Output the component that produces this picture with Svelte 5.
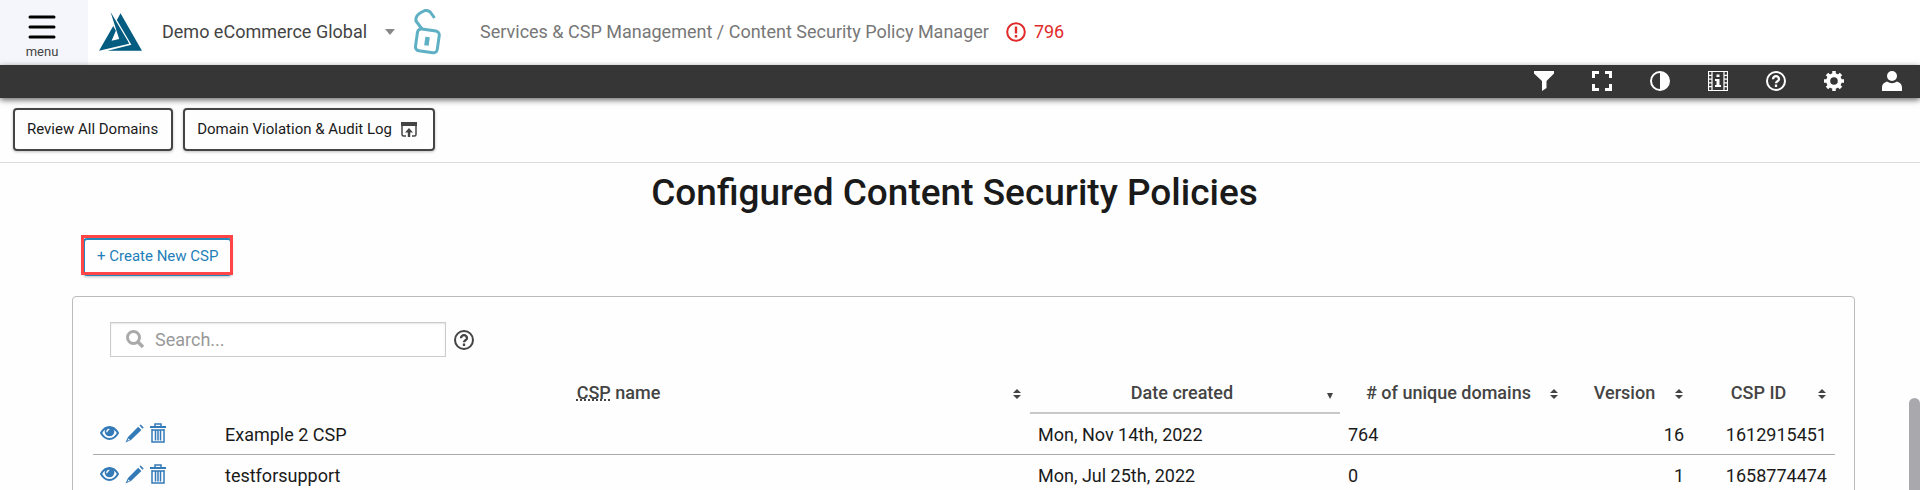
<script>
  let search = $state('');

  const columns = [
    { key: 'created', label: 'Date created', sorted: true },
    { key: 'domains', label: '# of unique domains' },
    { key: 'version', label: 'Version' },
    { key: 'id', label: 'CSP ID' }
  ];

  const policies = [
    { name: 'Example 2 CSP', created: 'Mon, Nov 14th, 2022', domains: 764, version: 16, id: '1612915451' },
    { name: 'testforsupport', created: 'Mon, Jul 25th, 2022', domains: 0, version: 1, id: '1658774474' }
  ];

  let visible = $derived(
    policies.filter((p) => p.name.toLowerCase().includes(search.toLowerCase()))
  );
</script>

{#snippet helpIcon()}
  <svg viewBox="0 0 20 20" width="20" height="20" fill="none" stroke="currentColor" stroke-width="2">
    <circle cx="10" cy="10" r="9" />
    <path d="M7 8.200a3 3 0 0 1 6 0c0 2-3 2.200-3 4M10 13.600v2.400" stroke-width="2.300" />
  </svg>
{/snippet}

{#snippet sorter()}
  <svg class="sorter" viewBox="0 0 8 12" width="8" height="12" fill="currentColor">
    <path d="M4 1l4 4H0zM4 11l4-4H0z" />
  </svg>
{/snippet}

<div class="app">
  <header>
    <button class="menu">
      <svg viewBox="0 0 28 24" width="28" height="24" stroke="#000" stroke-width="3" stroke-linecap="round">
        <path d="M2 2h24M2 12h24M2 22h24" />
      </svg>
      <span>menu</span>
    </button>
    <svg class="logo" viewBox="0 0 130 118" width="43" height="39" fill="#045c80">
      <path d="M35 0L61 82 38 87 51 57 43 42 0 117 91 96 88 89z" />
      <path d="M65 4l65 113H26l72-18L54 24z" />
    </svg>
    <button class="site">
      Demo eCommerce Global
      <svg viewBox="0 0 10 6" width="10" height="6" fill="#888"><path d="M0 0h10L5 6z" /></svg>
    </button>
    <svg class="lock" viewBox="0 0 28 48" width="28" height="48" fill="none" stroke="#5fb0c4" stroke-width="3">
      <path d="M20.500 10L17 5Q15 2 11 2.500L7 4.500Q1 8 2 13L8 21" />
      <rect x="2.500" y="22" width="22" height="22" rx="4" transform="rotate(8 14 32)" />
      <path d="M13.600 29l-1.200 8.500" stroke-width="4.500" />
    </svg>
    <nav>Services &amp; CSP Management / Content Security Policy Manager</nav>
    <a class="alerts" href="#alerts">
      <svg viewBox="0 0 20 20" width="20" height="20" fill="none" stroke="currentColor" stroke-width="2">
        <circle cx="10" cy="10" r="8.800" />
        <path d="M10 4.500v7M10 13v2.500" stroke-width="2.400" />
      </svg>
      796
    </a>
  </header>

  <div class="tools">
    <button aria-label="Filter">
      <svg viewBox="0 0 20 20" width="20" height="20" fill="currentColor"><path d="M0 0h20v2.500L12.500 10v7L8 20v-10L0 2.500z" /></svg>
    </button>
    <button aria-label="Full screen">
      <svg viewBox="0 0 20 20" width="20" height="20" fill="none" stroke="currentColor" stroke-width="3"><path d="M1.500 7V1.500H7M13 1.500h5.500V7M18.500 13v5.500H13M7 18.500H1.500V13" /></svg>
    </button>
    <button aria-label="Contrast">
      <svg viewBox="0 0 20 20" width="20" height="20"><circle cx="10" cy="10" r="9" fill="none" stroke="currentColor" stroke-width="2" /><path d="M10 1a9 9 0 0 1 0 18z" fill="currentColor" /></svg>
    </button>
    <button aria-label="Tour">
      <svg viewBox="0 0 20 20" width="20" height="20">
        <path d="M.5.5h19v19H.5zM4 0v20M16 0v20M0 4.300h4M0 8.100h4M0 11.900h4M0 15.700h4M16 4.300h4M16 8.100h4M16 11.900h4M16 15.700h4" fill="none" stroke="currentColor" stroke-width="1.200" />
        <path d="M8.500 3.500h3v2.500h-3zM7 8h4.500v6H13v2H7v-2h1.500v-4H7z" fill="currentColor" />
      </svg>
    </button>
    <button aria-label="Help">{@render helpIcon()}</button>
    <button aria-label="Settings">
      <svg viewBox="0 0 20 20" width="20" height="20" fill="none" stroke="currentColor">
        <circle cx="10" cy="10" r="5.800" stroke-width="4" />
        <path d="M10 0v3M10 17v3M0 10h3M17 10h3M3 3l2 2M15 15l2 2M3 17l2-2M15 5l2-2" stroke-width="3.500" />
      </svg>
    </button>
    <button aria-label="Account">
      <svg viewBox="0 0 20 20" width="20" height="20" fill="currentColor"><circle cx="10" cy="5" r="5" /><path d="M0 20v-3c0-4 2-5.500 5-6.500q5 3.500 10 0c3 1 5 2.500 5 6.500v3z" /></svg>
    </button>
  </div>

  <div class="actions">
    <button class="btn">Review All Domains</button>
    <button class="btn">
      Domain Violation &amp; Audit Log
      <svg class="open-icon" viewBox="0 0 16 16" width="16" height="16">
        <path d="M5 14H2.500Q1 14 1 12.500V3h14v9.500Q15 14 13.500 14H11" fill="none" stroke="#444" stroke-width="1.500" />
        <path d="M0 0h16v4H0zM8 6l4 4.500H9.200V15H6.800v-4.500H4z" fill="#444" />
      </svg>
    </button>
  </div>

  <div class="scroller">
    <main>
      <h1>Configured Content Security Policies</h1>
      <button class="btn create">+ Create New CSP</button>

      <section class="panel">
        <div class="search-row">
          <label class="search">
            <svg viewBox="0 0 18 20" width="18" height="20" fill="none" stroke="#aaa">
              <circle cx="7.500" cy="7.500" r="6" stroke-width="3" />
              <path d="M12 12l5 5" stroke-width="3.500" />
            </svg>
            <input type="text" placeholder="Search..." aria-label="Search" bind:value={search} />
          </label>
          <button class="help" aria-label="Search help">{@render helpIcon()}</button>
        </div>

        <table>
          <colgroup>
            <col class="col-actions" />
            <col class="col-name" />
            <col class="col-created" />
            <col class="col-domains" />
            <col class="col-version" />
            <col class="col-id" />
          </colgroup>
          <thead>
            <tr>
              <td></td>
              <th><abbr title="Content Security Policy">CSP</abbr> name{@render sorter()}</th>
              {#each columns as column (column.key)}
                <th class:sorted={column.sorted}>
                  {column.label}
                  {#if column.sorted}
                    <svg class="sorter" viewBox="0 0 8 12" width="8" height="12" fill="currentColor"><path d="M1 5h6l-3 6z" /></svg>
                  {:else}
                    {@render sorter()}
                  {/if}
                </th>
              {/each}
            </tr>
          </thead>
          <tbody>
            {#each visible as policy (policy.id)}
              <tr>
                <td class="icons">
                  <div class="row-actions">
                    <button aria-label="View {policy.name}">
                      <svg viewBox="0 0 19 14" width="19" height="14">
                        <path d="M1 7Q4.500 1 9.500 1T18 7Q14.500 13 9.500 13T1 7z" fill="none" stroke="currentColor" stroke-width="2" />
                        <circle cx="9.500" cy="5.500" r="4.800" fill="currentColor" />
                        <path d="M6.800 6.200q0-2.700 2.500-2.900" fill="none" stroke="#fff" stroke-width="1.200" />
                      </svg>
                    </button>
                    <button aria-label="Edit {policy.name}">
                      <svg viewBox="0 0 19 19" width="19" height="19" fill="currentColor"><path d="M14.500 1.500l1.200-1 3 3-1.200 1.300zM13.200 2.700l3.200 3.200L6 16l-5.500 2.500L3 13zM3.500 14.500l-1 2.200 2.300-1z" fill-rule="evenodd" /></svg>
                    </button>
                    <button aria-label="Delete {policy.name}">
                      <svg viewBox="0 0 16 20" width="16" height="20" fill="none" stroke="currentColor"><path d="M0 4h16" stroke-width="2" /><path d="M5 3.500V1h6v2.500M2 6v13h12V6M5.500 6.500v11M8 6.500v11M10.500 6.500v11M2 7h12" stroke-width="1.500" /></svg>
                    </button>
                  </div>
                </td>
                <td>{policy.name}</td>
                <td>{policy.created}</td>
                <td>{policy.domains}</td>
                <td class="number">{policy.version}</td>
                <td class="number">{policy.id}</td>
              </tr>
            {/each}
          </tbody>
        </table>
      </section>
    </main>
    <div class="track"><div class="thumb"></div></div>
  </div>
</div>

<style>
  :global(body) {
    background: #fefefe;
  }

  .app {
    display: flex;
    flex-direction: column;
    height: 100vh;
    overflow: hidden;
    color: #1a1a1a;
    font-family: Roboto, 'Liberation Sans', sans-serif;
    font-size: 18px;
    line-height: 24px;
  }

  button {
    padding: 0;
    border: 0;
    background: none;
    color: inherit;
    font: inherit;
    cursor: pointer;
  }

  svg {
    display: block;
    flex: none;
  }

  header {
    display: flex;
    flex: none;
    align-items: center;
    box-sizing: border-box;
    height: 65px;
    padding-bottom: 2px;
    background: #fff;
  }

  .menu {
    display: flex;
    flex-direction: column;
    align-items: center;
    align-self: flex-start;
    gap: 4px;
    box-sizing: border-box;
    width: 88px;
    height: 65px;
    padding: 15px 4px 0 0;
    background: #f5f6fb;
    color: #444;
    font-size: 13px;
    line-height: 18px;
  }

  .logo {
    margin-left: 11px;
  }

  .site {
    display: flex;
    align-items: center;
    gap: 18px;
    margin-left: 20px;
    color: #444;
  }

  .lock {
    margin-left: 19px;
  }

  nav {
    margin-left: 38px;
    color: #777;
  }

  .alerts {
    display: flex;
    align-items: center;
    gap: 8px;
    margin-left: 17px;
    color: #e02b2b;
    text-decoration: none;
  }

  .tools {
    display: flex;
    flex: none;
    align-items: center;
    justify-content: flex-end;
    gap: 38px;
    box-sizing: border-box;
    height: 33px;
    padding: 0 18px 2px;
    background: #363636;
    box-shadow: 0 2px 6px rgba(0, 0, 0, 0.6);
    color: #fff;
  }

  .actions {
    display: flex;
    flex: none;
    gap: 10px;
    padding: 10px 13px 11px;
    border-bottom: 1px solid #ddd;
  }

  .btn {
    display: flex;
    align-items: center;
    padding: 0 13px 0 12px;
    border: 2px solid #444;
    border-radius: 4px;
    box-shadow: 0 1px 3px rgba(0, 0, 0, 0.25);
    font-size: 15px;
    line-height: 39px;
  }

  .open-icon {
    margin: 0 3px 0 9px;
  }

  .scroller {
    display: flex;
    flex: 1;
    min-height: 0;
  }

  main {
    flex: 1;
  }

  h1 {
    margin: 10px 0 25px;
    font-size: 37px;
    font-weight: 500;
    line-height: 40px;
    text-align: center;
  }

  .create {
    position: relative;
    margin-left: 83px;
    padding: 0 12px 2px;
    border-color: #2389bd;
    color: #1f7fb8;
    line-height: 32px;
  }

  /* highlight frame laid over the button */
  .create::after {
    content: '';
    position: absolute;
    inset: -5px -3px -1px -4px;
    border: 3px solid #ff4545;
  }

  .panel {
    margin: 20px 54px 0 72px;
    padding: 25px 19px 0 20px;
    border: 1px solid #bbb;
    border-radius: 4px;
  }

  .search-row {
    display: flex;
    align-items: center;
    gap: 8px;
    margin-left: 17px;
    color: #444;
  }

  .search {
    display: flex;
    align-items: center;
    gap: 11px;
    box-sizing: border-box;
    width: 336px;
    height: 35px;
    padding: 0 15px;
    border: 1px solid #ccc;
    background: #fff;
    box-shadow: inset 0 1px 2px rgba(0, 0, 0, 0.1);
  }

  .search input {
    flex: 1;
    min-width: 0;
    padding: 0;
    border: 0;
    outline: none;
    background: none;
    color: inherit;
    font: inherit;
  }

  .search input::placeholder {
    color: #999;
  }

  table {
    width: 100%;
    margin-top: 15px;
    border-collapse: separate;
    border-spacing: 0;
    table-layout: fixed;
  }

  .col-actions {
    width: 124px;
  }

  .col-created {
    width: 310px;
  }

  .col-domains {
    width: 227px;
  }

  .col-version {
    width: 125px;
  }

  .col-id {
    width: 143px;
  }

  th {
    position: relative;
    height: 38px;
    padding: 2px 18px 0 8px;
    border-bottom: 2px solid transparent;
    color: #444;
    font-weight: 500;
  }

  th.sorted {
    padding-right: 14px;
    border-bottom-color: #c8c8c8;
  }

  .sorter {
    position: absolute;
    top: 16px;
    right: 9px;
  }

  .sorted .sorter {
    right: 6px;
  }

  tbody td {
    height: 38px;
    padding: 2px 8px 0;
    border-bottom: 1px solid #aaa;
  }

  tbody .icons {
    height: 40px;
    padding: 0 7px;
  }

  .number {
    text-align: right;
  }

  .row-actions {
    display: flex;
    align-items: center;
    gap: 6px;
    padding-bottom: 2px;
    color: #337ab7;
  }

  .track {
    display: flex;
    align-items: flex-end;
    width: 11px;
  }

  .thumb {
    width: 100%;
    height: 28%;
    border-radius: 6px 6px 0 0;
    background: #a9a9ad;
  }
</style>
